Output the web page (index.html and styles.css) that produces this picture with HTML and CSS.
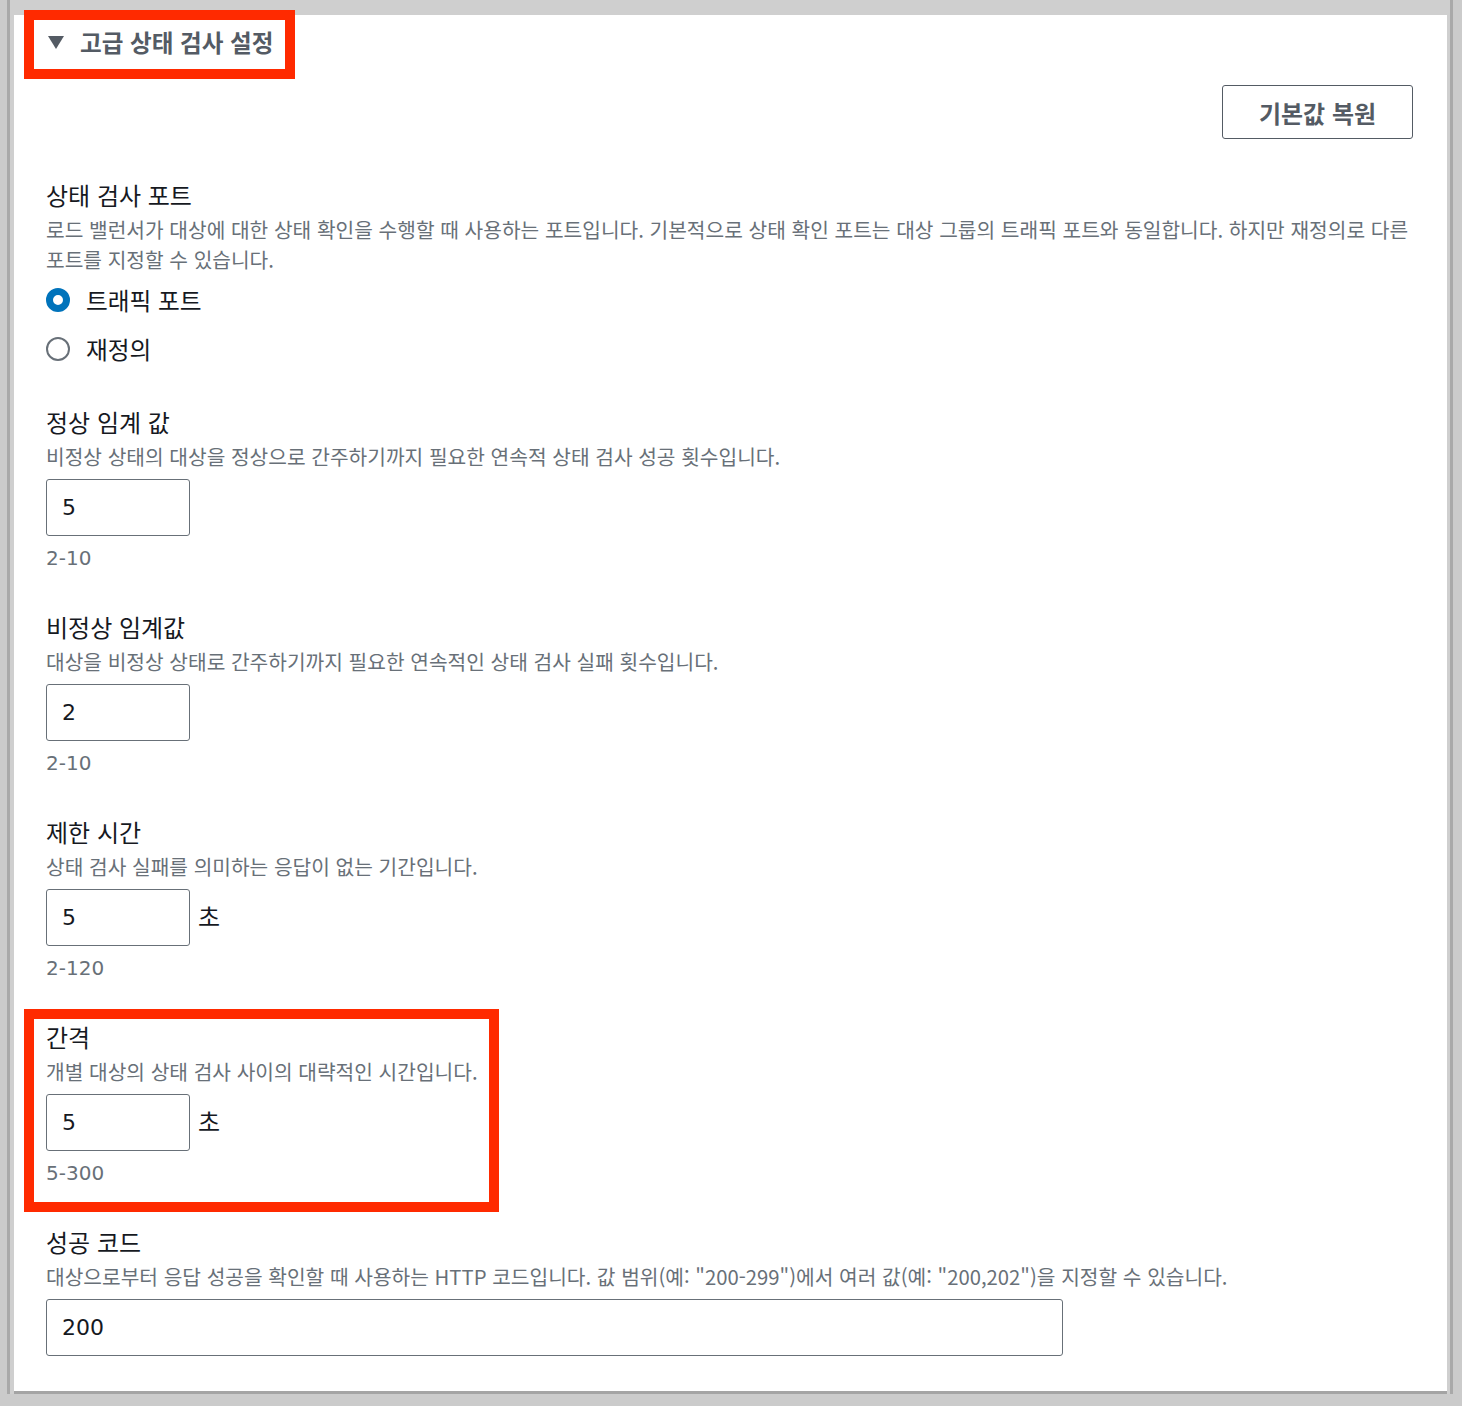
FILE: index.html
```html
<!DOCTYPE html>
<html lang='ko'>
	<head>
		<title>고급 상태 검사 설정</title>
		<meta charset='utf-8'>
		<link rel="stylesheet" href="styles.css">
	</head>
	<body>
		<div class='frame'>
			<main class='panel'>
				<div class='expander'>
					<span class='caret'></span>
					<h2>고급 상태 검사 설정</h2>
				</div>
				<div class='actions'>
					<button class='btn' type='button'>기본값 복원</button>
				</div>
				<section class='field'>
					<label class='field-label'>상태 검사 포트</label>
					<p class='field-desc'>로드 밸런서가 대상에 대한 상태 확인을 수행할 때 사용하는 포트입니다. 기본적으로 상태 확인 포트는 대상 그룹의 트래픽 포트와 동일합니다. 하지만 재정의로 다른 포트를 지정할 수 있습니다.</p>
					<div class='radio-group'>
						<label class='radio'><span class='radio-dot checked'></span>트래픽 포트</label>
						<label class='radio'><span class='radio-dot'></span>재정의</label>
					</div>
				</section>
				<section class='field'>
					<label class='field-label'>정상 임계 값</label>
					<p class='field-desc'>비정상 상태의 대상을 정상으로 간주하기까지 필요한 연속적 상태 검사 성공 횟수입니다.</p>
					<div class='control'><input class='input' type='text' value='5'></div>
					<p class='field-hint'>2-10</p>
				</section>
				<section class='field'>
					<label class='field-label'>비정상 임계값</label>
					<p class='field-desc'>대상을 비정상 상태로 간주하기까지 필요한 연속적인 상태 검사 실패 횟수입니다.</p>
					<div class='control'><input class='input' type='text' value='2'></div>
					<p class='field-hint'>2-10</p>
				</section>
				<section class='field'>
					<label class='field-label'>제한 시간</label>
					<p class='field-desc'>상태 검사 실패를 의미하는 응답이 없는 기간입니다.</p>
					<div class='control'><input class='input' type='text' value='5'><span class='unit'>초</span></div>
					<p class='field-hint'>2-120</p>
				</section>
				<section class='field'>
					<label class='field-label'>간격</label>
					<p class='field-desc'>개별 대상의 상태 검사 사이의 대략적인 시간입니다.</p>
					<div class='control'><input class='input' type='text' value='5'><span class='unit'>초</span></div>
					<p class='field-hint'>5-300</p>
				</section>
				<section class='field'>
					<label class='field-label'>성공 코드</label>
					<p class='field-desc'>대상으로부터 응답 성공을 확인할 때 사용하는 HTTP 코드입니다. 값 범위(예: "200-299")에서 여러 값(예: "200,202")을 지정할 수 있습니다.</p>
					<div class='control'><input class='input wide' type='text' value='200'></div>
				</section>
			</main>
		</div>
		<div class='annot annot-header'></div>
		<div class='annot annot-interval'></div>
	</body>
</html>
```

FILE: styles.css
```css
html,body{
	margin:0;
}

*{
	box-sizing:border-box;
}

body{
	background:#cbcbcb;
	font-family:"Noto Sans CJK KR",sans-serif;
	color:#16191f;
	min-height:1406px;
	position:relative;
}

.frame{
	margin-left:7px;
	width:1446px;
	padding:15px 3px 0 4px;
	border-left:3px solid #a9a9a9;
	border-right:3px solid #a9a9a9;
	background:#cfcfcf;
}

.panel{
	display:flex;
	flex-direction:column;
	background:#fff;
	padding:11px 34px 35px 32px;
	border-bottom:3px solid #a4a4a4;
}

.expander{
	display:flex;
	align-items:center;
	height:32px;
	gap:16px;
	padding-left:2px;
}
.caret{
	width:0;
	height:0;
	border-left:8px solid transparent;
	border-right:8px solid transparent;
	border-top:13px solid #545b64;
	margin-top:1px;
}
h2{
	margin:0;
	font-size:23.6px;
	font-weight:bold;
	line-height:32px;
	color:#545b64;
}

.actions{
	display:flex;
	justify-content:flex-end;
	margin-top:27px;
	margin-bottom:41px;
}
.btn{
	width:191px;
	height:54px;
	background:#fff;
	border:1px solid #545b64;
	border-radius:3px;
	font-family:inherit;
	font-size:24px;
	font-weight:bold;
	color:#545b64;
	padding:0;
}

.field{
	display:flex;
	flex-direction:column;
	align-items:flex-start;
}
.field+.field{
	margin-top:39px;
}
.field-label{
	font-size:24px;
	line-height:30px;
}
.field-desc{
	margin:4px 0 0;
	font-size:20.3px;
	line-height:30px;
	color:#687078;
}
.field-hint{
	margin:7px 0 0;
	font-family:"DejaVu Sans","Noto Sans CJK KR",sans-serif;
	font-size:20px;
	line-height:30px;
	color:#687078;
}

.radio-group{
	display:flex;
	flex-direction:column;
	gap:17px;
	margin-top:10px;
	padding-bottom:3px;
}
.radio{
	display:flex;
	align-items:center;
	gap:16px;
	height:32px;
	font-size:23.7px;
}
.radio-dot{
	width:24px;
	height:24px;
	border-radius:50%;
	border:2px solid #687078;
	background:#fff;
}
.radio-dot.checked{
	border:7px solid #0073bb;
}

.control{
	display:flex;
	align-items:center;
	margin-top:8px;
}
.input{
	width:144px;
	height:57px;
	border:1px solid #687078;
	border-radius:3px;
	padding:0 0 0 15px;
	font-family:"DejaVu Sans","Noto Sans CJK KR",sans-serif;
	font-size:22px;
	color:#16191f;
	background:#fff;
}
.input.wide{
	width:1017px;
}
.unit{
	margin-left:8px;
	margin-top:-4px;
	font-size:24px;
}

.annot{
	position:absolute;
	border:10px solid #ff2a00;
	pointer-events:none;
}
.annot-header{
	left:24px;
	top:10px;
	width:271px;
	height:69px;
}
.annot-interval{
	left:24px;
	top:1009px;
	width:475px;
	height:203px;
}
```
